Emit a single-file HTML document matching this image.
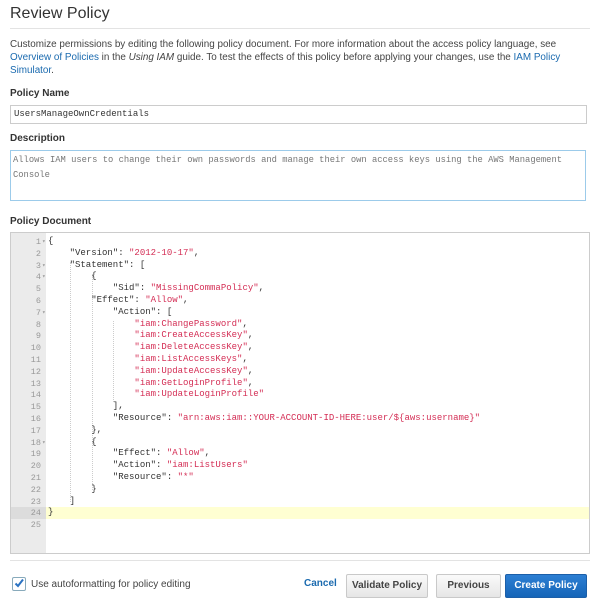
<!DOCTYPE html>
<html><head><style>
body{margin:0;background:#fff;font-family:"Liberation Sans",sans-serif;color:#333;width:600px;height:605px;position:relative;overflow:hidden}
.abs{position:absolute}
h1{position:absolute;left:10px;top:5px;margin:0;font-size:16px;font-weight:normal;color:#333}
.hr{position:absolute;left:10px;width:580px;height:1px;background:#e3e3e3}
p{position:absolute;left:10px;top:38px;margin:0;font-size:9.9px;line-height:13px;width:582px;color:#444}
a{color:#1a6aaf;text-decoration:none}
.lbl{position:absolute;left:10px;font-size:10px;font-weight:bold;color:#333}
.mono{font-family:"Liberation Mono",monospace}
.ed{position:absolute;left:10px;top:232px;width:578px;height:320px;border:1px solid #ccc;background:#fff;overflow:hidden}
.gut{position:absolute;left:0;top:0;width:35px;height:100%;background:#ebebeb}
.ln{position:absolute;left:0;width:30px;text-align:right;color:#999;font-size:8.5px;font-family:"Liberation Mono",monospace}
.code{position:absolute;left:37px;font-size:9px;white-space:pre;color:#333;font-family:"Liberation Mono",monospace}
.s{color:#d42e55}
.g{position:absolute;width:0;border-left:1px dotted #ccc}
.btn{position:absolute;top:574px;height:22px;border:1px solid #c9c9c9;border-radius:2px;background:linear-gradient(#fafafa,#e6e6e6);font-size:10px;font-weight:bold;color:#444;text-align:center;line-height:22px}
</style></head><body>
<h1>Review Policy</h1>
<div class="hr" style="top:28px"></div>
<p>Customize permissions by editing the following policy document. For more information about the access policy language, see <a>Overview of Policies</a> in the <i>Using IAM</i> guide. To test the effects of this policy before applying your changes, use the <a>IAM Policy Simulator</a>.</p>
<div class="lbl" style="top:88px">Policy Name</div>
<div class="abs mono" style="left:10px;top:105px;width:572px;height:17px;border:1px solid #ccc;font-size:9px;line-height:17px;padding-left:3px;color:#333">UsersManageOwnCredentials</div>
<div class="lbl" style="top:133px">Description</div>
<div class="abs mono" style="left:10px;top:150px;width:570px;height:45px;border:1px solid #9ccbea;font-size:8.8px;line-height:15px;padding:2px 2px;color:#777">Allows IAM users to change their own passwords and manage their own access keys using the AWS Management Console</div>
<div class="lbl" style="top:216px">Policy Document</div>
<div class="ed">
<div class="gut"></div>
<div class="abs" style="left:0;top:274px;width:35px;height:12px;background:#dcdcdc"></div>
<div class="abs" style="left:35px;top:274px;width:543px;height:12px;background:#ffffd2"></div>
<div class="g" style="left:59px;top:29px;height:240px"></div>
<div class="g" style="left:81px;top:41px;height:216px"></div>
<div class="g" style="left:102px;top:88px;height:81px"></div>
<div id="lines"></div>
</div>
<div class="hr" style="top:560px"></div>
<div class="abs" style="left:12px;top:577px;width:12px;height:12px;border:1px solid #8ab;border-radius:2px;background:#fff"></div>
<svg class="abs" style="left:13px;top:577px" width="12" height="12"><path d="M2.5 6.5 L5 9 L10 2.5" stroke="#2a72c2" stroke-width="2" fill="none"/></svg>
<div class="abs" style="left:31px;top:579px;font-size:10px;color:#444">Use autoformatting for policy editing</div>
<div class="abs" style="left:304px;top:578px;font-size:10px;font-weight:bold;color:#1a6aaf">Cancel</div>
<div class="btn" style="left:346px;width:80px">Validate Policy</div>
<div class="btn" style="left:436px;width:63px">Previous</div>
<div class="btn" style="left:505px;width:80px;background:linear-gradient(#2d7fd3,#1565b8);border-color:#1c5fa8;color:#fff">Create Policy</div>
<script>
var L=[
'{','    "Version": <s>"2012-10-17"</s>,','    "Statement": [','        {','            "Sid": <s>"MissingCommaPolicy"</s>,','        "Effect": <s>"Allow"</s>,','            "Action": [','                <s>"iam:ChangePassword"</s>,','                <s>"iam:CreateAccessKey"</s>,','                <s>"iam:DeleteAccessKey"</s>,','                <s>"iam:ListAccessKeys"</s>,','                <s>"iam:UpdateAccessKey"</s>,','                <s>"iam:GetLoginProfile"</s>,','                <s>"iam:UpdateLoginProfile"</s>','            ],','            "Resource": <s>"arn:aws:iam::YOUR-ACCOUNT-ID-HERE:user/${aws:username}"</s>','        },','        {','            "Effect": <s>"Allow"</s>,','            "Action": <s>"iam:ListUsers"</s>','            "Resource": <s>"*"</s>','        }','    ]','}',''];
var fold=[1,3,4,7,18],h='';
for(var i=0;i<25;i++){var y=3+i*11.8;
h+='<div class="ln" style="top:'+(y+1)+'px">'+(i+1)+(fold.indexOf(i+1)>=0?'<span style="font-size:6px;position:absolute;left:31px;top:1px">▾</span>':'')+'</div>';
h+='<div class="code" style="top:'+y+'px">'+L[i].replace(/<s>/g,'<span class="s">').replace(/<\/s>/g,'</span>')+'</div>';}
document.getElementById('lines').innerHTML=h;
</script>
</body></html>
